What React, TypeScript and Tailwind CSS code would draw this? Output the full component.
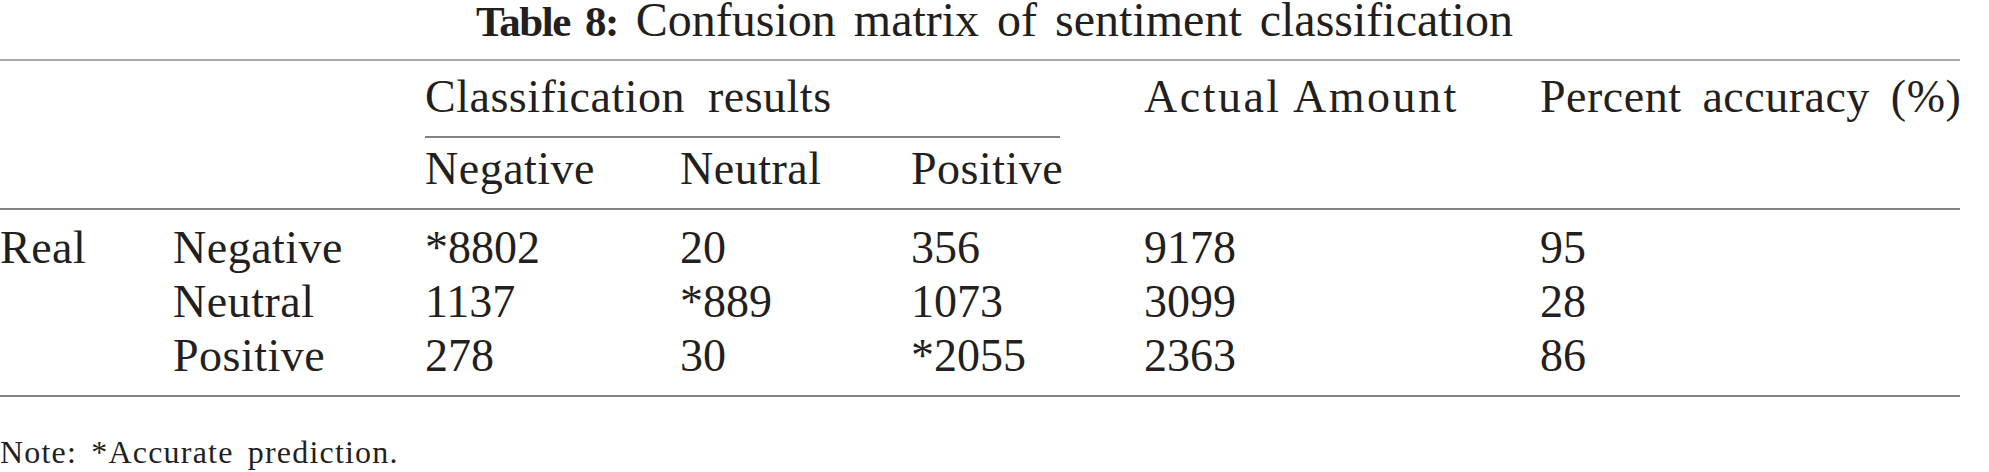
export default function App() {
  const cols = "grid grid-cols-[173px_252px_255px_231px_233px_396px_420px]";
  const rows: string[][] = [
    ["Real", "Negative", "*8802", "20", "356", "9178", "95"],
    ["", "Neutral", "1137", "*889", "1073", "3099", "28"],
    ["", "Positive", "278", "30", "*2055", "2363", "86"],
  ];
  return (
    <div className="w-[1989px] h-[472px] bg-white text-[#231f20] font-['Liberation_Serif',serif] overflow-hidden">
      <div className="h-[59px] text-center text-[48px] leading-[40px] [word-spacing:6px] whitespace-nowrap">
        <span className="font-bold text-[43px] tracking-[-1.5px]">Table 8:</span> Confusion matrix of sentiment classification
      </div>
      <div className="w-[1960px] text-[46px] [word-spacing:5px] whitespace-nowrap">
        <div className="border-t-2 border-[#a7a9ac]" />
        <div className="border-b-2 border-[#808285]">
          <div className={`${cols} h-[77px] pt-[13px] leading-[46px]`}>
            <div />
            <div />
            <div className="col-span-3">
              <div className="w-[635px] h-[64px] border-b-2 border-[#808285] tracking-[0.5px] [word-spacing:11px]">
                Classification results
              </div>
            </div>
            <div className="tracking-[2.5px] [word-spacing:0px]">Actual Amount</div>
            <div className="tracking-[0.5px] [word-spacing:9px]">Percent accuracy (%)</div>
          </div>
          <div className={`${cols} h-[70px] leading-[62px] tracking-[0.5px]`}>
            <div />
            <div />
            <div>Negative</div>
            <div>Neutral</div>
            <div>Positive</div>
            <div />
            <div />
          </div>
        </div>
        <div className="border-b-2 border-[#808285] pt-[11px] pb-[12px]">
          {rows.map((r, i) => (
            <div key={i} className={`${cols} leading-[54px]`}>
              {r.map((c, j) => (
                <div key={j} className={j < 2 ? "tracking-[0.5px]" : ""}>
                  {c}
                </div>
              ))}
            </div>
          ))}
        </div>
        <div className="pt-[40px] text-[32px] leading-[30px] tracking-[1.2px]">Note: *Accurate prediction.</div>
      </div>
    </div>
  );
}
